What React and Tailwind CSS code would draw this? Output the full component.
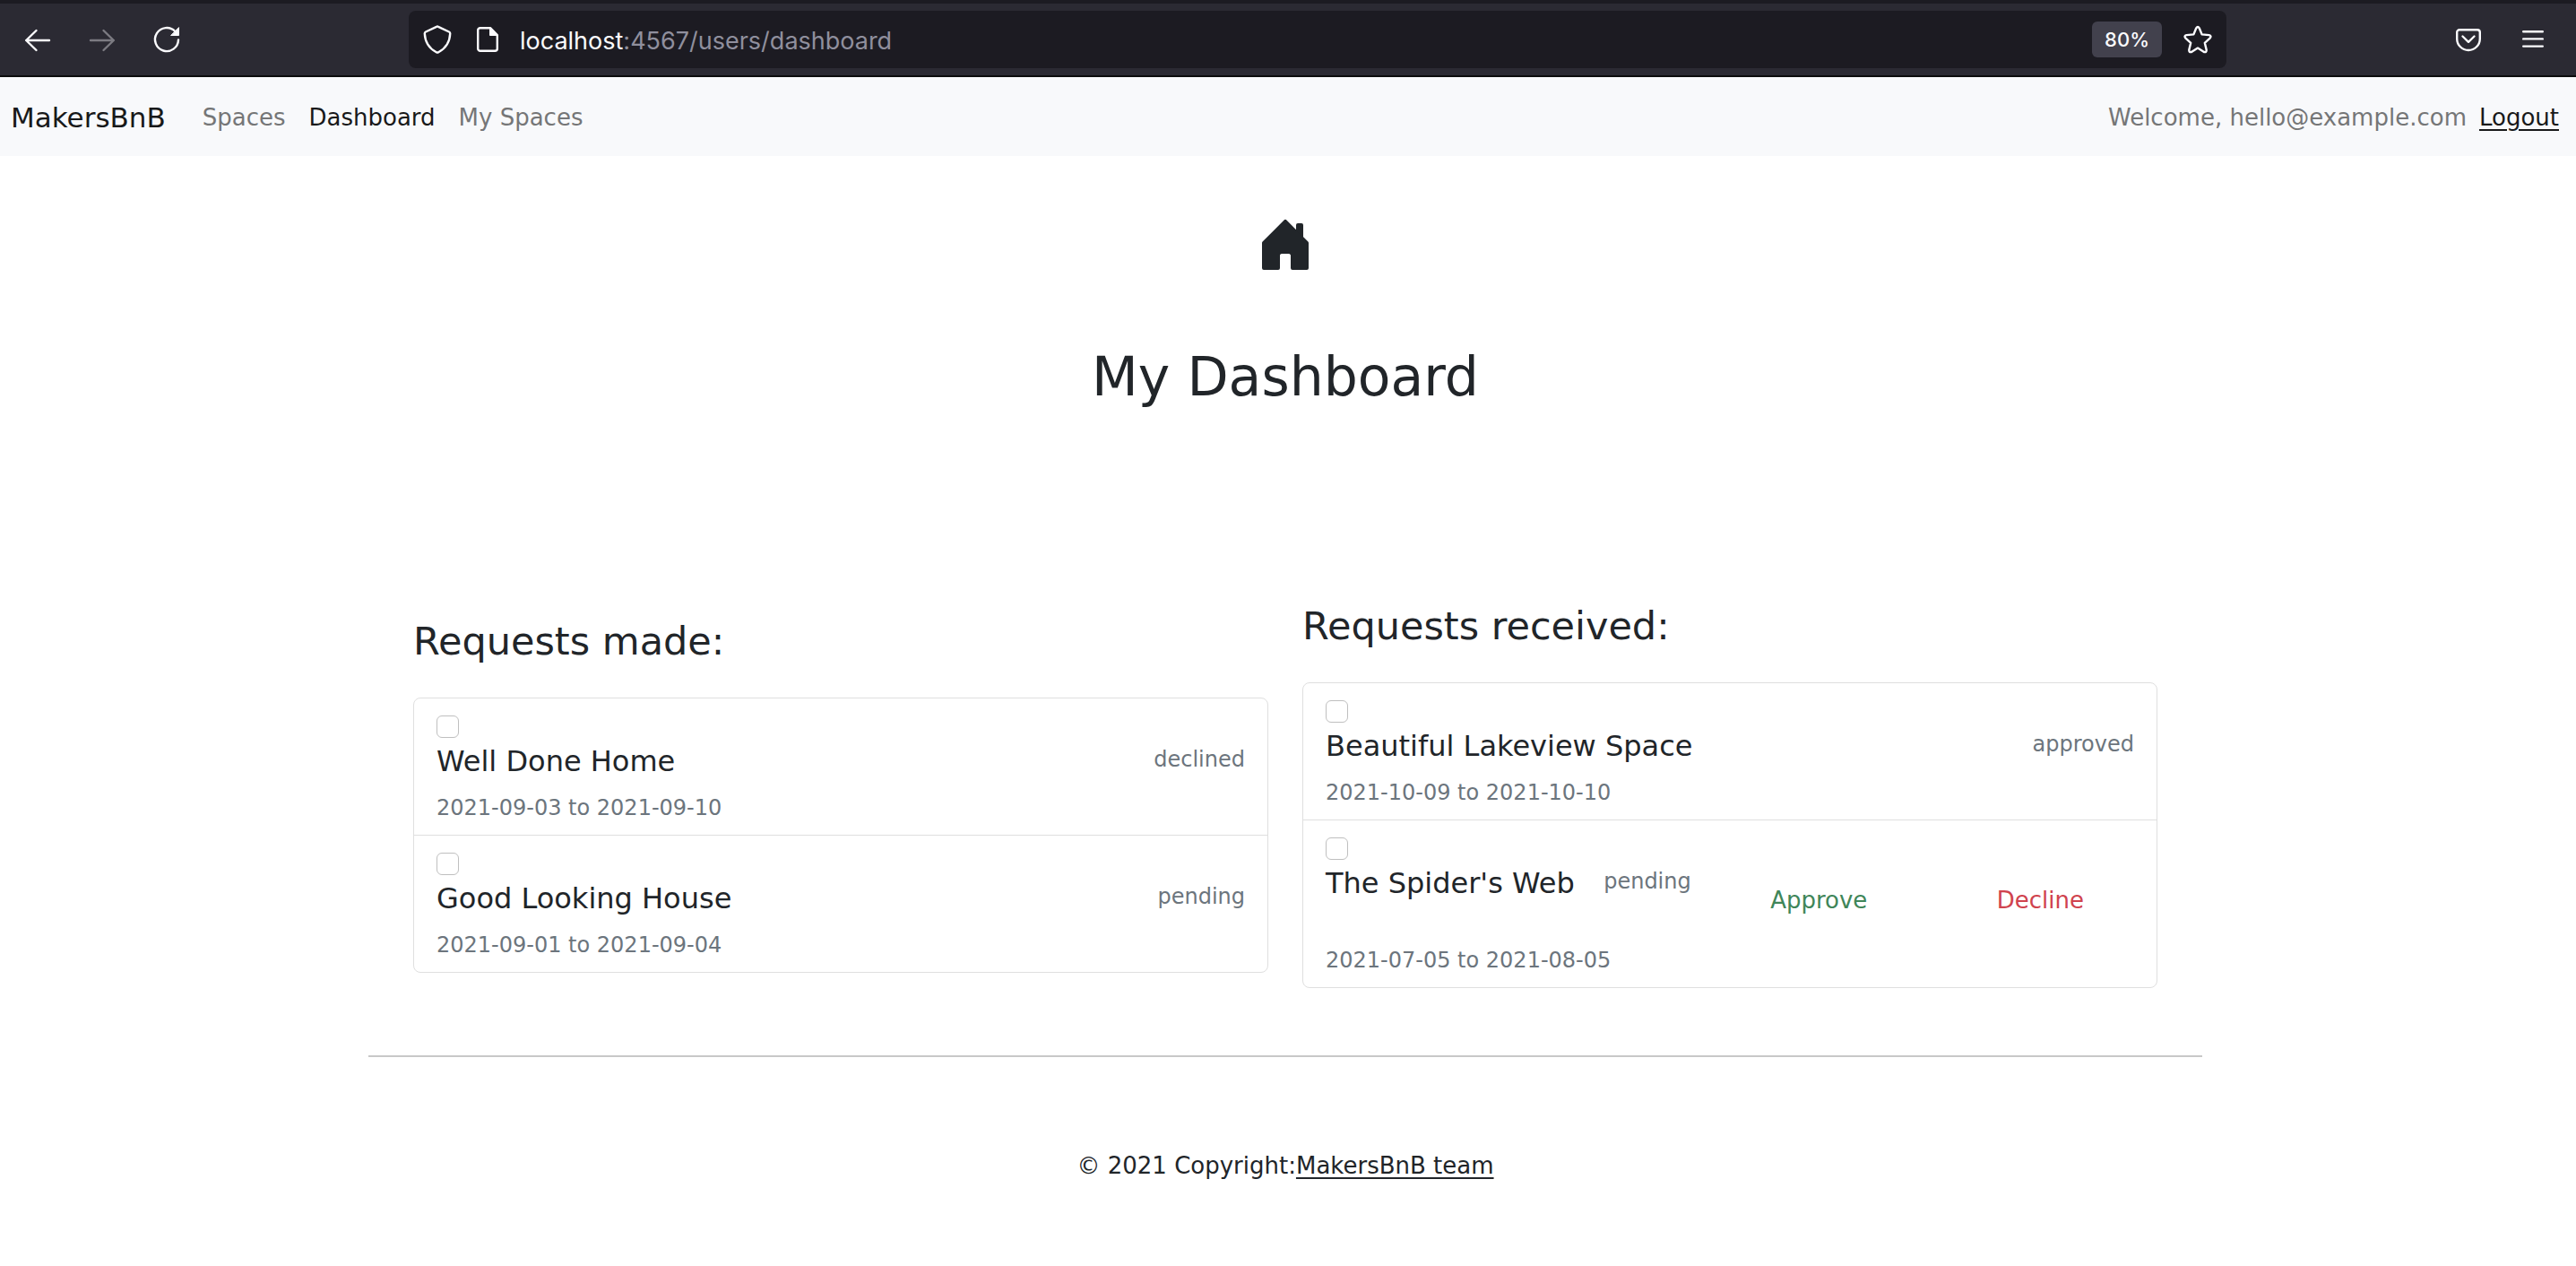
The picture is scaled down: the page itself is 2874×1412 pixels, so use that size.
const made = [
  { id: 'm1', name: 'Well Done Home', dates: '2021-09-03 to 2021-09-10', status: 'declined' },
  { id: 'm2', name: 'Good Looking House', dates: '2021-09-01 to 2021-09-04', status: 'pending' },
];

const received = [
  { id: 'r1', name: 'Beautiful Lakeview Space', dates: '2021-10-09 to 2021-10-10', status: 'approved' },
  { id: 'r2', name: "The Spider's Web", dates: '2021-07-05 to 2021-08-05', status: 'pending', actions: true },
];

function Icon({ children, className = '' }) {
  return (
    <svg
      viewBox="0 0 32 32"
      className={'size-8 shrink-0 ' + className}
      fill="none"
      stroke="currentColor"
      strokeWidth="2.4"
      strokeLinecap="round"
      strokeLinejoin="round"
      aria-hidden="true"
    >
      {children}
    </svg>
  );
}

function BrowserBar() {
  return (
    <div className="flex h-[86px] items-center border-t-4 border-b-2 border-t-[#1c1b22] border-b-[#0c0c0d] bg-[#2b2a33] pl-[26px] text-[#fbfbfe]">
      <div className="flex w-[430px] shrink-0 items-center gap-10">
        <button type="button" aria-label="Back">
          <Icon><path d="M29 17H3.200M14.500 6L3.200 17L14.500 28" /></Icon>
        </button>
        <button type="button" aria-label="Forward" className="text-[#7c7b82]">
          <Icon><path d="M3 17H28.800M17.500 6L28.800 17L17.500 28" /></Icon>
        </button>
        <button type="button" aria-label="Reload">
          <Icon>
            <path d="M29 16.500A13 13 0 1 1 25.500 7.200" />
            <path d="M29.500 3V11.500H21Z" fill="currentColor" strokeWidth="1" />
          </Icon>
        </button>
      </div>
      <div className="flex h-16 min-w-0 flex-1 items-center rounded-lg bg-[#1c1b22] px-4">
        <Icon>
          <path d="M15 1.800Q16 1.200 17 1.800L29 7.500Q30.300 8.200 30.200 9.500C29.800 19 26 25.500 17.200 30.200Q16 30.900 14.800 30.200C6 25.500 2.200 19 1.800 9.500Q1.700 8.200 3 7.500Z" />
        </Icon>
        <Icon className="ml-6">
          <path d="M8 3.200H19L26.800 11V26.200A2.600 2.600 0 0 1 24.200 28.800H8A2.600 2.600 0 0 1 5.200 26.200V6A2.600 2.600 0 0 1 8 3.200Z" />
          <path d="M18.500 3.500V11.500H26.500Z" fill="currentColor" strokeWidth="1" />
        </Icon>
        <span className="ml-5 flex-1 pt-[3px] text-[27px] leading-8 text-[#8f8f9d]">
          <span className="text-[#fbfbfe]">localhost</span>:4567/users/dashboard
        </span>
        <button type="button" className="h-10 rounded-md bg-[#42414d] px-[14px] text-[22px] font-medium">80%</button>
        <button type="button" aria-label="Bookmark this page" className="ml-6">
          <Icon>
            <path d="M14.300 3.300Q16 0.600 17.700 3.300L20.600 10.400L28.600 11.100Q31.600 12 29.800 14.300L23.800 19.800L25.700 27.600Q25.900 30.800 23 30L16 25.600L9 30Q6.100 30.800 6.300 27.600L8.200 19.800L2.200 14.300Q0.400 12 3.400 11.100L11.400 10.400Z" />
          </Icon>
        </button>
      </div>
      <div className="flex w-[390px] shrink-0 items-center justify-end gap-10 pr-8">
        <button type="button" aria-label="Save to Pocket">
          <Icon>
            <path d="M6 5.200H26A2.800 2.800 0 0 1 28.800 8V15.200A12.800 12.800 0 0 1 3.200 15.200V8A2.800 2.800 0 0 1 6 5.200Z" />
            <path d="M9.500 12.500L16 18.800L22.500 12.500" />
          </Icon>
        </button>
        <button type="button" aria-label="Open menu">
          <Icon><path d="M5.200 7.200H26.800M5.200 15.400H26.800M5.200 23.600H26.800" /></Icon>
        </button>
      </div>
    </div>
  );
}

function NavBar() {
  return (
    <nav className="flex h-[88px] items-center bg-[#f8f9fb] pt-[2px] pr-[19px] pl-[12px] text-[26px] text-[#757677]">
      <a href="#home" className="text-[31px] text-[#18191a]">MakersBnB</a>
      <div className="ml-[41px] flex flex-1 gap-[26px]">
        <a href="#spaces">Spaces</a>
        <a href="#dashboard" aria-current="page" className="text-[#18191a]">Dashboard</a>
        <a href="#my-spaces">My Spaces</a>
      </div>
      <span>Welcome, hello@example.com</span>
      <a href="#logout" className="ml-[14px] text-[#18191a] underline decoration-2 underline-offset-4">Logout</a>
    </nav>
  );
}

function Request({ item }) {
  return (
    <li className="border-t border-[#dfdfdf] px-[25px] py-3 first:border-t-0">
      <input
        type="checkbox"
        id={item.id}
        className="mt-[7px] block size-[25px] appearance-none rounded-[6px] border border-[#bfbfbf] bg-white"
      />
      <div className="mt-[6px] flex items-start justify-between">
        <label htmlFor={item.id} className="text-[32px] leading-10">{item.name}</label>
        <span className="text-[24px] leading-9 text-[#6c757d]">{item.status}</span>
        {item.actions && (
          <>
            <button type="button" className="px-14 pt-5 pb-4 text-[26px] leading-[38px] text-[#3f8659]">Approve</button>
            <button type="button" className="px-14 pt-5 pb-4 text-[26px] leading-[38px] text-[#d0434e]">Decline</button>
          </>
        )}
      </div>
      <p className="mt-[14px] text-[24px] leading-9 text-[#6c757d]">{item.dates}</p>
    </li>
  );
}

function RequestList({ title, items }) {
  return (
    <section className="min-w-0 flex-1">
      <h2 className="text-[43px] leading-[54px]">{title}</h2>
      <ul className="mt-9 rounded-lg border border-[#dfdfdf]">
        {items.map((item) => <Request key={item.id} item={item} />)}
      </ul>
    </section>
  );
}

export default function App() {
  return (
    <div className="min-h-screen bg-white">
      <div className="font-[Inter,sans-serif]">
        <BrowserBar />
      </div>
      <div className={'font-["DejaVu_Sans",sans-serif] text-[#212529]'}>
        <NavBar />
        <div className="pr-[6px]">
          <header className="flex flex-col items-center pt-[67px]">
            <svg viewBox="0 0 16 16" className="size-16" fill="currentColor" aria-hidden="true">
              <path d="M6.500 10.995V14.500a.5.5 0 0 1-.5.5H2a.5.5 0 0 1-.5-.5v-7a.5.5 0 0 1 .146-.354l6-6a.5.5 0 0 1 .708 0l6 6a.5.5 0 0 1 .146.354v7a.5.5 0 0 1-.5.5h-4a.5.5 0 0 1-.5-.5V11c0-.25-.25-.5-.5-.5H7c-.25 0-.5.25-.5.495z" />
              <path d="M13 2.500V6l-2-2V2.500a.5.5 0 0 1 .5-.5h1a.5.5 0 0 1 .5.5z" />
            </svg>
            <h1 className="mt-[76px] text-[60px] leading-[78px]">My Dashboard</h1>
          </header>
          <main className="mx-auto mt-[212px] flex max-w-[2046px] items-center gap-[38px] border-b-2 border-[#c8c8c8] px-[50px] pb-[75px]">
            <RequestList title="Requests made:" items={made} />
            <RequestList title="Requests received:" items={received} />
          </main>
          <footer className="py-[102px] text-center text-[26px] leading-[38px]">
            © 2021 Copyright:<a href="#team" className="underline decoration-2 underline-offset-4">MakersBnB team</a>
          </footer>
        </div>
      </div>
    </div>
  );
}
